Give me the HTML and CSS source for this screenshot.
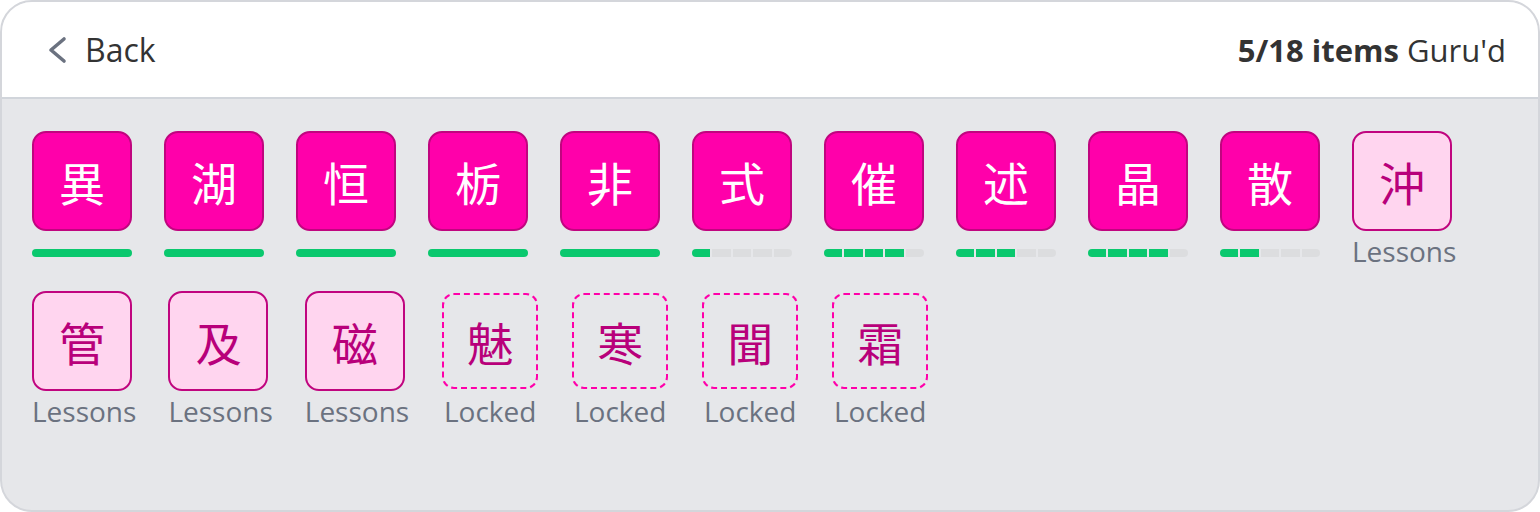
FILE: index.html
```html
<!DOCTYPE html>
<html lang="en">
<head>
	<meta charset="UTF-8">
	<title>Level items</title>
	<link rel="stylesheet" href="styles.css">
</head>
<body>
	<div class="card">
		<div class="top">
			<a class="back" href="#">
				<svg width="20" height="28" viewBox="0 0 20 28"><path d="M17 3 L4 14 L17 25" fill="none" stroke="#6b7280" stroke-width="3.6" stroke-linecap="round" stroke-linejoin="round"/></svg>
				<span>Back</span>
			</a>
			<div class="count"><b>5/18 items</b> Guru'd</div>
		</div>
		<div class="items">
			<!-- 已完成 -->
			<div class="item"><div class="tile done">異</div><div class="bar full"></div></div>
			<div class="item"><div class="tile done">湖</div><div class="bar full"></div></div>
			<div class="item"><div class="tile done">恒</div><div class="bar full"></div></div>
			<div class="item"><div class="tile done">栃</div><div class="bar full"></div></div>
			<div class="item"><div class="tile done">非</div><div class="bar full"></div></div>
			<!-- 学习中 -->
			<div class="item"><div class="tile done">式</div><div class="bar"><i class="on"></i><i></i><i></i><i></i><i></i></div></div>
			<div class="item"><div class="tile done">催</div><div class="bar"><i class="on"></i><i class="on"></i><i class="on"></i><i class="on"></i><i></i></div></div>
			<div class="item"><div class="tile done">述</div><div class="bar"><i class="on"></i><i class="on"></i><i class="on"></i><i></i><i></i></div></div>
			<div class="item"><div class="tile done">晶</div><div class="bar"><i class="on"></i><i class="on"></i><i class="on"></i><i class="on"></i><i></i></div></div>
			<div class="item"><div class="tile done">散</div><div class="bar"><i class="on"></i><i class="on"></i><i></i><i></i><i></i></div></div>
			<!-- 课程 -->
			<div class="item"><div class="tile lesson">沖</div><div class="label">Lessons</div></div>
			<div class="item"><div class="tile lesson">管</div><div class="label">Lessons</div></div>
			<div class="item"><div class="tile lesson">及</div><div class="label">Lessons</div></div>
			<div class="item"><div class="tile lesson">磁</div><div class="label">Lessons</div></div>
			<!-- 未解锁 -->
			<div class="item"><div class="tile locked">魅</div><div class="label">Locked</div></div>
			<div class="item"><div class="tile locked">寒</div><div class="label">Locked</div></div>
			<div class="item"><div class="tile locked">聞</div><div class="label">Locked</div></div>
			<div class="item"><div class="tile locked">霜</div><div class="label">Locked</div></div>
		</div>
	</div>
</body>
</html>
```
FILE: styles.css
```css
*{margin: 0;padding: 0;box-sizing: border-box;}
body{background: #fff;font-family: "Open Sans", "Noto Sans", sans-serif;}
.card{height: 512px;border: 2px solid #d4d6db;border-radius: 32px;overflow: hidden;background: #e6e7ea;display: flex;flex-direction: column;}
.top{height: 97px;background: #fff;border-bottom: 2px solid #d1d5db;display: flex;align-items: center;justify-content: space-between;padding: 0 32px 0 45px;flex-shrink: 0;}
.back{display: flex;align-items: center;gap: 18px;text-decoration: none;color: #333;font-size: 32px;}
.back svg{display: block;}
.count{font-size: 31px;color: #333;}
.count b{font-weight: 700;}
.items{display: flex;flex-wrap: wrap;align-items: flex-start;column-gap: 32px;row-gap: 22px;padding: 32px 30px;}
.item{display: flex;flex-direction: column;align-items: flex-start;}
.tile{width: 100px;height: 100px;border-radius: 14px;display: flex;align-items: center;justify-content: center;font-family: "Noto Sans CJK JP", sans-serif;font-size: 46px;line-height: 1;}
.tile.done{background: #ff00aa;border: 2px solid #c0057f;color: #fff;}
.tile.lesson{background: #ffd5ef;border: 2px solid #c0057f;color: #b8007a;}
.tile.locked{width: 96px;height: 96px;margin: 2px 1px;border: 2px dashed #ff00aa;border-radius: 12px;color: #b8007a;}
.bar{width: 100px;height: 8px;margin-top: 18px;display: flex;gap: 2px;border-radius: 4px;overflow: hidden;}
.bar.full{background: #0ac86e;}
.bar i{flex: 1;background: #dcdddf;}
.bar i.on{background: #0ac86e;}
.label{align-self: center;margin-top: 2px;font-size: 28px;line-height: 36px;color: #6b7280;}
```
